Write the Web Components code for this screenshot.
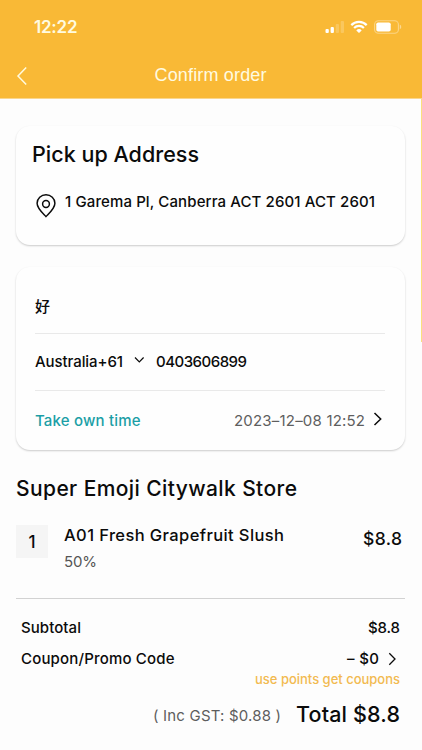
<!DOCTYPE html>
<html lang="en">
<head>
<meta charset="utf-8">
<title>Confirm order</title>
<style>
html,body{margin:0;padding:0}
body{width:422px;height:750px;overflow:hidden;background:#fdfdfd;color:#0b0b0b;font-family:Inter,"Liberation Sans","Noto Sans CJK SC",sans-serif}
</style>
</head>
<body>
<order-page></order-page>
<script>
// Single line of text, tracked so that its glyphs span the width given in "span".
class TrackedText extends HTMLElement {
  connectedCallback() {
    const s = this.getAttribute('size'), h = this.getAttribute('line') || 20;
    const root = this.attachShadow({mode:'open'});
    root.innerHTML = `<style>:host{display:block;flex:none;white-space:nowrap;font-size:${s}px;line-height:${h}px;height:${h}px}span{display:inline-block}</style><span><slot></slot></span>`;
    const span = +this.getAttribute('span');
    if (!span) return;
    const inner = root.querySelector('span');
    const n = this.textContent.length;
    const track = n > 1 ? (span - inner.getBoundingClientRect().width) / (n - 1) : 0;
    inner.style.letterSpacing = track + 'px';
    inner.style.marginRight = -track + 'px';
    this.style.width = span + 'px';
  }
}

const icons = {
  back: [12,20,'<path d="M10.2 1.5 2 10l8.200 8.500" stroke-width="1.500"/>'],
  next: [10,16,'<path d="m1.500 2 6.200 6-6.200 6" stroke-width="1.500"/>'],
  small: [9,14,'<path d="m1.300 1.300 5.700 5.700-5.700 5.700" stroke-width="1.300"/>'],
  down: [11,8,'<path d="m1 1.500 4.300 4.300L9.600 1.500" stroke-width="1.200"/>'],
  pin: [20,24,'<path d="M10 22.600C7.500 19.800 1.100 14.700 1.100 9.300a8.900 8.500 0 0 1 17.800 0c0 5.400-6.400 10.500-8.900 13.300Z" stroke-width="1.500" stroke-linejoin="round"/><circle cx="10" cy="10" r="3.400" stroke-width="1.500"/>'],
  signal: [20,14,'<g fill="currentColor" stroke="none"><rect x=".5" y="9" width="3.300" height="4" rx="1"/><rect x="5.600" y="7" width="3.300" height="6" rx="1"/><rect x="10.700" y="4" width="3.300" height="9" rx="1" opacity=".2"/><rect x="15.700" y="1" width="3.300" height="12" rx="1" opacity=".2"/></g>'],
  wifi: [18,14,'<path d="M1.300 5.100a10.900 10.900 0 0 1 15.400 0M4.100 8a6.900 6.900 0 0 1 9.800 0" stroke-width="2.200"/><path d="M9 13 6.300 10.400a3.900 3.900 0 0 1 5.400 0Z" fill="currentColor" stroke="none"/>'],
  battery: [28,14,'<rect x=".6" y=".7" width="23.800" height="12.600" rx="3.800" stroke-width="1.100" opacity=".4"/><rect x="2.300" y="2.500" width="14.400" height="9" rx="1.800" fill="currentColor" stroke="none"/><path d="M25.800 4.800c1.900.5 1.900 3.900 0 4.400Z" fill="currentColor" stroke="none" opacity=".45"/>']
};
class LineIcon extends HTMLElement {
  connectedCallback() {
    const [w,h,d] = icons[this.getAttribute('name')];
    this.attachShadow({mode:'open'}).innerHTML = `<style>:host{display:block;flex:none;width:${w}px;height:${h}px}svg{display:block}</style><svg width="${w}" height="${h}" viewBox="0 0 ${w} ${h}" fill="none" stroke="currentColor">${d}</svg>`;
  }
}

const define = (name, html) => customElements.define(name, class extends HTMLElement {
  connectedCallback() { this.attachShadow({mode:'open'}).innerHTML = html; }
});

customElements.define('tracked-text', TrackedText);
customElements.define('line-icon', LineIcon);

define('app-header', `<style>
:host{display:block;box-sizing:border-box;height:99px;background:#f9b936;color:#fffbe0;padding-top:17px;border-bottom:1px solid #fad68d}
.status{display:flex;height:20px;align-items:center;padding:0 20px 0 34px}
.status tracked-text{font-weight:600;margin-right:auto}
.wifi{margin:0 6px 0 5px}
.icons{display:flex;align-items:center;color:#fff}
.nav{display:grid;grid-template-columns:60px 1fr 60px;align-items:center;height:40px;margin-top:18px}
.nav line-icon{margin:1px 0 0 16px}
.nav tracked-text{justify-self:center;font-family:"Liberation Sans",Arial,sans-serif;margin-left:-1px}
</style>
<div class="status"><tracked-text size="17" span="43.500">12:22</tracked-text>
<div class="icons"><line-icon name="signal"></line-icon><line-icon class="wifi" name="wifi"></line-icon><line-icon name="battery"></line-icon></div></div>
<div class="nav"><line-icon name="back"></line-icon><tracked-text size="18" span="112">Confirm order</tracked-text></div>`);

define('soft-card', `<style>
:host{display:block;box-sizing:border-box;margin:0 17px 0 16px;border-radius:14px;background:#fefefe;box-shadow:0 1px 2px rgba(0,0,0,.2)}
</style><slot></slot>`);

define('pickup-address', `<style>
:host{display:block;height:119px;box-sizing:border-box;padding:16px 16px 0}
.row{display:flex;margin-top:26px;padding-left:4px;gap:9px}
tracked-text{font-weight:450}
.row line-icon{margin-top:2px}
</style>
<tracked-text size="21.500" line="24" span="167">Pick up Address</tracked-text>
<div class="row"><line-icon name="pin"></line-icon><tracked-text size="15" span="310">1 Garema Pl, Canberra ACT 2601 ACT 2601</tracked-text></div>`);

define('contact-form', `<style>
:host{display:block;height:183px;box-sizing:border-box;padding:9px 20px 0 19px}
.row{display:flex;align-items:center;height:57px;box-sizing:border-box;border-bottom:1px solid #e9e9e9}
.row:first-child{height:58px;padding-top:2px}
.row:nth-child(2){height:58px;padding-top:3px}
.row:last-child{border:0;height:58px;padding-top:1px}
.zh{font-family:"Noto Sans CJK SC",sans-serif;font-weight:500}
.code{font-weight:450}.down{margin:-4px 11px 0 11px}
.teal{color:#1b9ea6;font-weight:450;margin-right:auto}
.date{color:#5e5e5e}.next{margin:-3px 2px 0 8px}
</style>
<div class="row"><tracked-text class="zh" size="15">好</tracked-text></div>
<div class="row"><tracked-text class="code" size="15" span="88">Australia+61</tracked-text><line-icon class="down" name="down"></line-icon><tracked-text class="code" size="15" span="91">0403606899</tracked-text></div>
<div class="row"><tracked-text class="teal" size="15" span="105.500">Take own time</tracked-text><tracked-text class="date" size="15" span="131">2023–12–08 12:52</tracked-text><line-icon class="next" name="next"></line-icon></div>`);

define('order-items', `<style>
:host{display:block;margin:26px 17px 0 16px;height:122px;border-bottom:1px solid #d2d2d2}
tracked-text{font-weight:450}
.row{display:flex;margin-top:23px}
.qty{display:grid;place-items:center;width:32px;height:33px;background:#f5f5f5;margin-right:16px}
.info{margin-right:auto}
.opt{color:#555;font-weight:400;margin-top:6.500px}
.price{margin:4px 3px 0 0}
</style>
<tracked-text size="21" line="26" span="281">Super Emoji Citywalk Store</tracked-text>
<div class="row"><div class="qty"><tracked-text size="17">1</tracked-text></div>
<div class="info"><tracked-text size="16.500" span="220">A01 Fresh Grapefruit Slush</tracked-text><tracked-text class="opt" size="15" span="33">50%</tracked-text></div>
<tracked-text class="price" size="17.500" span="39">$8.8</tracked-text></div>`);

define('order-totals', `<style>
:host{display:block;padding:19px 22px 0 21px}
tracked-text{font-weight:450}
.row{display:flex;align-items:center;justify-content:space-between;height:20px}
.coupon{margin-top:11px}
.amount{display:flex;align-items:center;gap:9px;padding-right:3px}
.hint{color:#f2ba50;display:flex;justify-content:flex-end}
.sum{display:flex;align-items:center;justify-content:flex-end;gap:15px;margin-top:12px}
.gst{color:#5d5d5d;margin-top:4px;font-weight:400}
</style>
<div class="row"><tracked-text size="15" span="60">Subtotal</tracked-text><tracked-text size="15" span="32">$8.8</tracked-text></div>
<div class="row coupon"><tracked-text size="15" span="153.500">Coupon/Promo Code</tracked-text><div class="amount"><tracked-text size="15" span="32">– $0</tracked-text><line-icon name="small"></line-icon></div></div>
<div class="hint"><tracked-text size="13" span="145">use points get coupons</tracked-text></div>
<div class="sum"><tracked-text class="gst" size="15" span="128">( Inc GST: $0.88 )</tracked-text><tracked-text size="21.500" line="26" span="104">Total $8.8</tracked-text></div>`);

define('order-page', `<style>
:host{display:block;position:relative;width:422px;height:750px;overflow:hidden}
.address{margin-top:27px}.contact{margin-top:22px}
.edge{position:absolute;right:0;top:99px;width:1px;height:243px;background:#fae07c}
</style>
<app-header></app-header>
<soft-card class="address"><pickup-address></pickup-address></soft-card>
<soft-card class="contact"><contact-form></contact-form></soft-card>
<order-items></order-items>
<order-totals></order-totals>
<div class="edge"></div>`);
</script>
</body>
</html>
